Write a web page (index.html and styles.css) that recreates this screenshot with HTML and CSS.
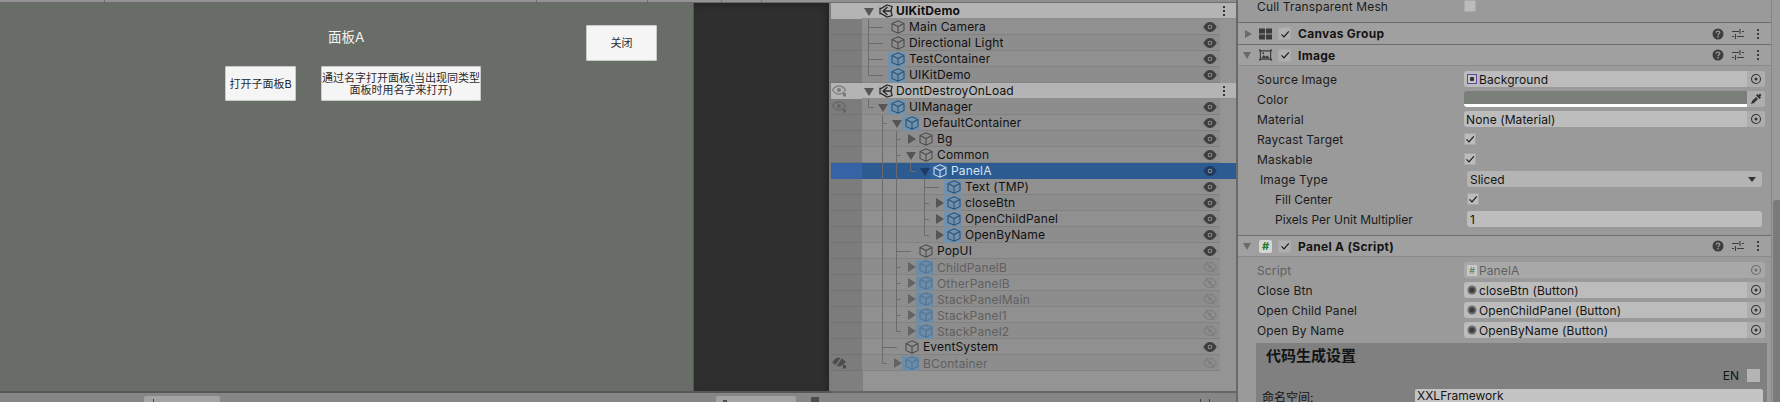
FILE: index.html
```html
<!DOCTYPE html>
<html lang="zh">
<head>
<meta charset="utf-8">
<title>UIKitDemo</title>
<link rel="stylesheet" href="styles.css">
</head>
<body>
<svg class="defs" width="0" height="0" aria-hidden="true">
  <symbol id="cube" viewBox="0 0 14 14"><path d="M7 .8 13 3.600v6.800L7 13.200 1 10.400V3.600zM1 3.600 7 6.600l6-3M7 6.600v6.600" fill="none" stroke="currentColor" stroke-width="1.100"/></symbol>
  <symbol id="unity" viewBox="0 0 14 14"><path d="M8 1 13 2.500 12 7 13 11.500 8 13 2 9.500H1L1 4.500H2zM8.500 3 4 7l4.500 4M4 7h7.500" fill="none" stroke="currentColor" stroke-width="1.300"/></symbol>
  <symbol id="eye" viewBox="0 0 14 12"><path d="M.3 6C3 1.800 5 1 7 1S11 1.800 13.700 6C11 10.200 9 11 7 11S3 10.200.3 6z" fill="currentColor"/><circle cx="7" cy="6" r="2.300" fill="#8f8f8f"/><circle cx="7" cy="6" r="1.300" fill="currentColor"/></symbol>
  <symbol id="eyeoff" viewBox="0 0 14 12"><path d="M.5 6C3 2.300 5 1.500 7 1.500S11 2.300 13.500 6C11 9.700 9 10.500 7 10.500S3 9.700.5 6z" fill="none" stroke="currentColor" stroke-width="1.200"/><circle cx="7" cy="6" r="1.800" fill="currentColor"/><path d="M2.500 1 11.500 11" stroke="currentColor" stroke-width="1.400"/></symbol>
  <symbol id="sceneeye" viewBox="0 0 14 12"><path d="M.3 5C3 1.500 5 .8 7 .8S11 1.500 13.700 5C11 8.500 9 9.200 7 9.200S3 8.500 .3 5z" fill="none" stroke="currentColor" stroke-width="1.200"/><circle cx="7" cy="5" r="2" fill="currentColor"/><path d="M11 8h3v3.500h-3z" fill="currentColor"/></symbol>
  <symbol id="sceneoff" viewBox="0 0 14 12"><path d="M.3 5C3 1.500 5 .8 7 .8S11 1.500 13.700 5C11 8.500 9 9.200 7 9.200S3 8.500 .3 5z" fill="currentColor"/><path d="M3 10 10 0" stroke="#7c7c7c" stroke-width="1.400"/><path d="M11 8h3v3.500h-3z" fill="currentColor"/></symbol>
  <symbol id="kebab" viewBox="0 0 4 12"><path d="M1 1h2v2H1zM1 5h2v2H1zM1 9h2v2H1z" fill="currentColor"/></symbol>
  <symbol id="target" viewBox="0 0 12 12"><circle cx="6" cy="6" r="4.500" fill="none" stroke="currentColor" stroke-width="1.100"/><circle cx="6" cy="6" r="1.500" fill="currentColor"/></symbol>
  <symbol id="help" viewBox="0 0 12 12"><circle cx="6" cy="6" r="5.500" fill="currentColor"/><path d="M4.200 4.700C4.200 3.700 5 3.100 6 3.100s1.800.6 1.800 1.500C7.800 5.800 6 5.700 6 7.200" fill="none" stroke="#9a9a9a" stroke-width="1.300"/><path d="M5.300 8.100h1.400v1.300H5.300z" fill="#9a9a9a"/></symbol>
  <symbol id="sliders" viewBox="0 0 12 12"><path d="M0 3.500h7M10 3.500h2M8 1v5M0 8.500h2M5 8.500h7M3.500 6v5" fill="none" stroke="currentColor" stroke-width="1.100"/></symbol>
  <symbol id="comp" viewBox="0 0 13 11"><path d="M0 0h6v5H0zM7 0h6v5H7zM0 6h6v5H0zM7 6h6v5H7z" fill="currentColor"/></symbol>
  <symbol id="picture" viewBox="0 0 14 12"><path d="M1.500 1.500h11v9h-11z" fill="none" stroke="currentColor" stroke-width="1.200"/><path d="M2.500 9.500 5 6l2 2 2-1.500 2.500 3z" fill="currentColor"/><circle cx="4.500" cy="4" r="1" fill="currentColor"/><path d="M0 0h2v2H0zM12 0h2v2h-2zM0 10h2v2H0zM12 10h2v2h-2z" fill="currentColor"/></symbol>
  <symbol id="check" viewBox="0 0 12 12"><path d="M2.500 6.300 5 8.800 9.800 3.300" fill="none" stroke="currentColor" stroke-width="1.200"/></symbol>
  <symbol id="dropper" viewBox="0 0 12 12"><path d="M1 11 2 8 6 4 8 6 4 10zM6 2.500 9.500 6 11 4.500 10 3.500 11.500 2 10 .5 8.500 2 7.500 1z" fill="currentColor"/></symbol>
  <symbol id="radio" viewBox="0 0 10 10"><circle cx="5" cy="5" r="4.500" fill="#6d6d6d"/><circle cx="5" cy="5" r="2.600" fill="#3c3c3c"/></symbol>
</svg>

<main class="app">
  <section class="left">
    <div class="strip"><i class="t1"></i><i class="t2"></i><i class="t3"></i><i class="t4"></i><i class="t5"></i></div>
    <div class="stage">
      <div class="game">
        <h1 class="game-title">面板A</h1>
        <button class="ui-btn btn-close">关闭</button>
        <button class="ui-btn btn-child">打开子面板B</button>
        <button class="ui-btn btn-name">通过名字打开面板(当出现同类型面板时用名字来打开)</button>
      </div>
      <div class="void"></div>
    </div>
    <div class="foot">
      <span class="foot-tab tab-a"><i class="mark"></i></span>
      <span class="foot-tab tab-b"><i class="sq small"></i></span>
      <i class="sq"></i>
    </div>
  </section>

  <section class="hier">
    <div class="hier-top"></div>
    <div class="tree">
      <div class="row scene"><span class="gut"></span><span class="arrow down"></span><svg class="uni"><use href="#unity"/></svg><b class="name">UIKitDemo</b><svg class="keb"><use href="#kebab"/></svg></div>
      <div class="row d1 a"><span class="gut"></span><span class="ind"></span><span class="arrow"></span><span class="ico"><svg><use href="#cube"/></svg></span><span class="name">Main Camera</span><svg class="vis"><use href="#eye"/></svg></div>
      <div class="row d1 b"><span class="gut"></span><span class="ind"></span><span class="arrow"></span><span class="ico"><svg><use href="#cube"/></svg></span><span class="name">Directional Light</span><svg class="vis"><use href="#eye"/></svg></div>
      <div class="row d1 a"><span class="gut"></span><span class="ind"></span><span class="arrow"></span><span class="ico pf"><svg><use href="#cube"/></svg></span><span class="name">TestContainer</span><svg class="vis"><use href="#eye"/></svg></div>
      <div class="row d1 b"><span class="gut"></span><span class="ind"></span><span class="arrow"></span><span class="ico pf"><svg><use href="#cube"/></svg></span><span class="name">UIKitDemo</span><svg class="vis"><use href="#eye"/></svg></div>
      <div class="row scene"><span class="gut"><svg class="sv"><use href="#sceneeye"/></svg></span><span class="arrow down"></span><svg class="uni"><use href="#unity"/></svg><span class="name">DontDestroyOnLoad</span><svg class="keb"><use href="#kebab"/></svg></div>
      <div class="row d1 b"><span class="gut"><svg class="sv"><use href="#sceneeye"/></svg></span><span class="ind"></span><span class="arrow down"></span><span class="ico pf"><svg><use href="#cube"/></svg></span><span class="name">UIManager</span><svg class="vis"><use href="#eye"/></svg></div>
      <div class="row d2 a"><span class="gut"></span><span class="ind"></span><span class="arrow down"></span><span class="ico pf"><svg><use href="#cube"/></svg></span><span class="name">DefaultContainer</span><svg class="vis"><use href="#eye"/></svg></div>
      <div class="row d3 b"><span class="gut"></span><span class="ind"></span><span class="arrow right"></span><span class="ico"><svg><use href="#cube"/></svg></span><span class="name">Bg</span><svg class="vis"><use href="#eye"/></svg></div>
      <div class="row d3 a"><span class="gut"></span><span class="ind"></span><span class="arrow down"></span><span class="ico"><svg><use href="#cube"/></svg></span><span class="name">Common</span><svg class="vis"><use href="#eye"/></svg></div>
      <div class="row d4 sel"><span class="gut"></span><span class="ind"></span><span class="arrow down"></span><span class="ico pf"><svg><use href="#cube"/></svg></span><span class="name">PanelA</span><svg class="vis"><use href="#eye"/></svg></div>
      <div class="row d5 a"><span class="gut"></span><span class="ind"></span><span class="arrow"></span><span class="ico pf"><svg><use href="#cube"/></svg></span><span class="name">Text (TMP)</span><svg class="vis"><use href="#eye"/></svg></div>
      <div class="row d5 b"><span class="gut"></span><span class="ind"></span><span class="arrow right"></span><span class="ico pf"><svg><use href="#cube"/></svg></span><span class="name">closeBtn</span><svg class="vis"><use href="#eye"/></svg></div>
      <div class="row d5 a"><span class="gut"></span><span class="ind"></span><span class="arrow right"></span><span class="ico pf"><svg><use href="#cube"/></svg></span><span class="name">OpenChildPanel</span><svg class="vis"><use href="#eye"/></svg></div>
      <div class="row d5 b"><span class="gut"></span><span class="ind"></span><span class="arrow right"></span><span class="ico pf"><svg><use href="#cube"/></svg></span><span class="name">OpenByName</span><svg class="vis"><use href="#eye"/></svg></div>
      <div class="row d3 a"><span class="gut"></span><span class="ind"></span><span class="arrow"></span><span class="ico"><svg><use href="#cube"/></svg></span><span class="name">PopUI</span><svg class="vis"><use href="#eye"/></svg></div>
      <div class="row d3 b off"><span class="gut"></span><span class="ind"></span><span class="arrow right"></span><span class="ico pf"><svg><use href="#cube"/></svg></span><span class="name">ChildPanelB</span><svg class="vis"><use href="#eyeoff"/></svg></div>
      <div class="row d3 a off"><span class="gut"></span><span class="ind"></span><span class="arrow right"></span><span class="ico pf"><svg><use href="#cube"/></svg></span><span class="name">OtherPanelB</span><svg class="vis"><use href="#eyeoff"/></svg></div>
      <div class="row d3 b off"><span class="gut"></span><span class="ind"></span><span class="arrow right"></span><span class="ico pf"><svg><use href="#cube"/></svg></span><span class="name">StackPanelMain</span><svg class="vis"><use href="#eyeoff"/></svg></div>
      <div class="row d3 a off"><span class="gut"></span><span class="ind"></span><span class="arrow right"></span><span class="ico pf"><svg><use href="#cube"/></svg></span><span class="name">StackPanel1</span><svg class="vis"><use href="#eyeoff"/></svg></div>
      <div class="row d3 b off"><span class="gut"></span><span class="ind"></span><span class="arrow right"></span><span class="ico pf"><svg><use href="#cube"/></svg></span><span class="name">StackPanel2</span><svg class="vis"><use href="#eyeoff"/></svg></div>
      <div class="row d2 a"><span class="gut"></span><span class="ind"></span><span class="arrow"></span><span class="ico"><svg><use href="#cube"/></svg></span><span class="name">EventSystem</span><svg class="vis"><use href="#eye"/></svg></div>
      <div class="row d2 b off"><span class="gut"><svg class="sv"><use href="#sceneoff"/></svg></span><span class="ind"></span><span class="arrow right"></span><span class="ico pf"><svg><use href="#cube"/></svg></span><span class="name">BContainer</span><svg class="vis"><use href="#eyeoff"/></svg></div>
      <svg class="lines" width="406" height="390" viewBox="0 0 406 390" aria-hidden="true">
        <path d="M37.500 16V72.500H52M37.500 24.500H52M37.500 40.500H52M37.500 56.500H52M37.500 96V104.500H43M51.500 112V360.500H56M51.500 120.500H56M51.500 344.500H66M65.500 128V328.500H70M65.500 136.500H70M65.500 152.500H70M65.500 248.500H80M65.500 264.500H70M65.500 280.500H70M65.500 296.500H70M65.500 312.500H70M79.500 160V168.500H85M93.500 176V232.500H98M93.500 184.500H108M93.500 200.500H98M93.500 216.500H98" fill="none" stroke="#6b6b6b" stroke-width="1"/>
      </svg>
    </div>
    <div class="foot hier-foot"><i class="mark"></i><i class="mark"></i></div>
  </section>

  <section class="insp">
    <div class="props first">
      <div class="prop"><label>Cull Transparent Mesh</label><span class="cb"></span></div>
    </div>
    <header class="comp">
      <span class="arrow-c right"></span><svg class="cicon"><use href="#comp"/></svg><span class="cb tick"><svg><use href="#check"/></svg></span><b>Canvas Group</b>
      <span class="tools"><svg><use href="#help"/></svg><svg><use href="#sliders"/></svg><svg class="tk"><use href="#kebab"/></svg></span>
    </header>
    <header class="comp">
      <span class="arrow-c down"></span><svg class="cicon"><use href="#picture"/></svg><span class="cb tick"><svg><use href="#check"/></svg></span><b>Image</b>
      <span class="tools"><svg><use href="#help"/></svg><svg><use href="#sliders"/></svg><svg class="tk"><use href="#kebab"/></svg></span>
    </header>
    <div class="props">
      <div class="prop"><label>Source Image</label><span class="field"><i class="sprite"></i><span class="val">Background</span><span class="pick"><svg><use href="#target"/></svg></span></span></div>
      <div class="prop"><label>Color</label><span class="field color"><span class="swatch"></span><span class="pick"><svg><use href="#dropper"/></svg></span></span></div>
      <div class="prop"><label>Material</label><span class="field plain"><span class="val">None (Material)</span><span class="pick"><svg><use href="#target"/></svg></span></span></div>
      <div class="prop"><label>Raycast Target</label><span class="cb tick"><svg><use href="#check"/></svg></span></div>
      <div class="prop"><label>Maskable</label><span class="cb tick"><svg><use href="#check"/></svg></span></div>
      <div class="prop ind1"><label>Image Type</label><span class="drop"><span>Sliced</span><i></i></span></div>
      <div class="prop ind2"><label>Fill Center</label><span class="cb tick"><svg><use href="#check"/></svg></span></div>
      <div class="prop ind2"><label>Pixels Per Unit Multiplier</label><span class="drop num">1</span></div>
    </div>
    <header class="comp script">
      <span class="arrow-c down"></span><span class="hash">#</span><span class="cb tick"><svg><use href="#check"/></svg></span><b>Panel A (Script)</b>
      <span class="tools"><svg><use href="#help"/></svg><svg><use href="#sliders"/></svg><svg class="tk"><use href="#kebab"/></svg></span>
    </header>
    <div class="props">
      <div class="prop dim"><label>Script</label><span class="field"><i class="hash-s">#</i><span class="val">PanelA</span><span class="pick"><svg><use href="#target"/></svg></span></span></div>
      <div class="prop"><label>Close Btn</label><span class="field"><svg class="rad"><use href="#radio"/></svg><span class="val">closeBtn (Button)</span><span class="pick"><svg><use href="#target"/></svg></span></span></div>
      <div class="prop"><label>Open Child Panel</label><span class="field"><svg class="rad"><use href="#radio"/></svg><span class="val">OpenChildPanel (Button)</span><span class="pick"><svg><use href="#target"/></svg></span></span></div>
      <div class="prop"><label>Open By Name</label><span class="field"><svg class="rad"><use href="#radio"/></svg><span class="val">OpenByName (Button)</span><span class="pick"><svg><use href="#target"/></svg></span></span></div>
    </div>
    <div class="gen">
      <h2>代码生成设置</h2>
      <div class="en"><span>EN</span><i></i></div>
      <div class="ns"><label>命名空间:</label><span class="ns-f">XXLFramework</span></div>
    </div>
    <i class="thumb"></i>
  </section>
</main>
</body>
</html>
```

FILE: styles.css
```css
* { box-sizing: border-box; }
html, body { margin: 0; height: 402px; overflow: hidden; background: #858585; }
body, button { font-family: Inter, "Noto Sans CJK SC", sans-serif; font-size: 12px; color: #111; }
.defs { position: absolute; }
.app { display: flex; height: 402px; width: 1780px; overflow: hidden; }

/* scene + game */
.left { width: 831px; display: flex; flex-direction: column; flex: none; }
.strip { height: 3px; background: #939393; border-bottom: 1px solid #6a6a6a; display: flex; flex: none; }
.strip i { width: 1px; height: 2px; background: #6f6f6f; }
.t1 { margin-left: 104px; }
.t2 { margin-left: 431px; }
.t3 { margin-left: 110px; }
.t4 { margin-left: 73px; }
.t5 { margin-left: 39px; }
.stage { height: 390px; display: flex; flex: none; border-bottom: 2px solid #575757; }
.game {
  width: 694px; flex: none; background: #686d68; border-right: 1px solid #555;
  display: grid; grid-template-columns: 225px 71px 25px 160px 105px 71px;
  grid-template-rows: 36px 35px; row-gap: 5px; padding-top: 22px; align-content: start;
}
.void { flex: 1; background: #2f2f2f; border-right: 2px solid #7b7b7b; box-shadow: inset 0 6px 6px -4px #262626, inset -6px 0 6px -4px #262626; }
.game-title { grid-column: 4; grid-row: 1; margin: 4px 0 0 7px; font-size: 13.500px; font-weight: 400; line-height: 16px; color: #f2f2f2; }
.ui-btn {
  border: 0; padding: 0; background: #f5f5f5; border-radius: 2px; color: #2a2a2a;
  font-size: 11px; line-height: 12px; box-shadow: 0 0 0 1px #c9cbc9 inset; text-align: center;
}
.btn-close { grid-column: 6; grid-row: 1; }
.btn-child { grid-column: 2; grid-row: 2; }
.btn-name { grid-column: 4; grid-row: 2; }

.foot { height: 7px; flex: 1; background: #868686; display: flex; position: relative; align-items: flex-end; }
.foot-tab { height: 6px; background: #a3a3a3; border-radius: 2px 2px 0 0; display: flex; align-items: flex-end; }
.tab-a { width: 76px; margin-left: 144px; padding-left: 9px; }
.tab-b { width: 80px; margin-left: 496px; padding-left: 7px; }
.mark { width: 1px; height: 3px; background: #444; display: block; }
.sq { width: 8px; height: 5px; background: #4e4e4e; margin-left: 15px; display: block; }
.sq.small { width: 4px; height: 2px; margin-left: 0; }

/* hierarchy */
.hier { width: 406px; flex: none; display: flex; flex-direction: column; border-right: 1px solid #6b6b6b; background: #979797; }
.hier-top { height: 3px; background: #8e8e8e; border-bottom: 1px solid #6f6f6f; flex: none; }
.tree { height: 390px; position: relative; flex: none; border-bottom: 2px solid #666; background: linear-gradient(90deg, #7f7f7f 32px, #949494 32px); }
.hier-foot { gap: 8px; justify-content: flex-end; padding-right: 26px; }
.row { height: 16px; display: flex; align-items: center; color: #101010; font-size: 12px; margin-right: 16px; white-space: nowrap; }
.row.a { background: #909090; box-shadow: 0 -1px 0 #828282 inset; }
.row.b { background: #8d8d8d; box-shadow: 0 -1px 0 #828282 inset; }
.gut { width: 31px; height: 16px; flex: none; background: #7c7c7c; box-shadow: 0 -1px 0 #727272 inset; display: flex; align-items: center; padding-left: 1px; }
.sv { width: 14px; height: 12px; color: #666; }
.row.scene { background: #b4b4b4; margin-right: 0; box-shadow: 0 -1px 0 #8d8d8d inset; }
.scene .gut { background: #b4b4b4; box-shadow: none; }
.scene .sv { color: #7a7a7a; }
.arrow { width: 14px; height: 16px; flex: none; position: relative; }
.arrow.down::after, .arrow.right::after { content: ""; position: absolute; }
.arrow.down::after { left: 2px; top: 5px; border: 5px solid transparent; border-top: 8px solid #555; border-bottom: 0; }
.arrow.right::after { left: 4px; top: 3px; border: 5px solid transparent; border-left: 8px solid #555; border-right: 0; }
.ind { flex: none; height: 16px; }
.d1 .ind { width: 14px; }
.d2 .ind { width: 28px; }
.d3 .ind { width: 42px; }
.d4 .ind { width: 56px; }
.d5 .ind { width: 70px; }
.uni { width: 14px; height: 14px; margin: 0 3px 0 3px; flex: none; color: #2a2a2a; }
.ico { width: 17px; height: 15px; flex: none; margin: 0 4px 0 -2px; display: flex; align-items: center; justify-content: flex-end; color: #4d4d4d; }
.ico svg { width: 14px; height: 14px; }
.ico.pf { background: #7191ad; color: #2b5578; }
.name { flex: 1; letter-spacing: .15px; padding-bottom: 2px; }
.vis { width: 14px; height: 12px; flex: none; margin-right: 3px; color: #3e3e3e; }
.keb { width: 4px; height: 12px; flex: none; margin-right: 10px; color: #333; }
.row.sel { background: #2c5b92; margin-right: 0; color: #d8e4f2; box-shadow: none; }
.sel .gut { background: #3464a6; box-shadow: none; }
.sel .vis { margin-right: 19px; color: #1e3a5e; }
.sel .ico.pf { background: #2f6099; color: #c7d8ea; }
.sel .arrow.down::after { border-top-color: #1c3c66; }
.off .name { color: #606060; padding-bottom: 0; }
.off .vis { color: #7d7d7d; }
.off .ico { color: #4f7699; background: #6f8ca6; }
.off .arrow::after { opacity: .75; }
.off .sv { color: #4d4d4d; }
.lines { position: absolute; left: 0; top: 0; pointer-events: none; }

/* inspector */
.insp { flex: 1; min-width: 0; background: #9a9a9a; color: #141414; border-left: 1px solid #666; position: relative; }
.insp::after { content: ""; position: absolute; top: 0; bottom: 0; left: 533px; width: 1px; background: #878787; }
.thumb { position: absolute; left: 535px; top: 200px; bottom: 0; width: 7px; background: #7b7b7b; border-radius: 3px 0 0 0; }
.props { padding: 4px 0 5px 19px; margin-right: 9px; }
.props.first { padding-top: 0; margin-top: -3px; }
.prop { height: 20px; display: flex; align-items: center; white-space: nowrap; padding-bottom: 2px; }
.prop label { width: 207px; flex: none; letter-spacing: .15px; color: #1a1a1a; }
.ind1 label { padding-left: 3px; }
.ind2 label { padding-left: 18px; letter-spacing: 0; }
.cb { width: 12px; height: 12px; display: block; background: #bcbcbc; border-radius: 2px; box-shadow: 0 0 0 1px #a8a8a8 inset; flex: none; }
.cb.tick { color: #1b1b1b; }
.cb svg { width: 12px; height: 12px; display: block; }
.comp { height: 23px; display: flex; align-items: center; margin-right: 9px; border-top: 1px solid #6d6d6d; border-bottom: 1px solid #6d6d6d; background: #a0a0a0; }
.comp + .comp { border-top: 0; height: 21px; border-bottom-color: #8a8a8a; }
.comp.script { height: 22px; border-bottom-color: #8a8a8a; }
.comp b { font-size: 12px; letter-spacing: .3px; margin-left: 7px; }
.arrow-c { width: 21px; height: 12px; flex: none; position: relative; }
.arrow-c::after { content: ""; position: absolute; }
.arrow-c.right::after { left: 7px; top: 2px; border: 4px solid transparent; border-left: 7px solid #6a6a6a; border-right: 0; }
.arrow-c.down::after { left: 5px; top: 3px; border: 4.500px solid transparent; border-top: 7px solid #6a6a6a; border-bottom: 0; }
.cicon { width: 13px; height: 12px; flex: none; margin-right: 6px; color: #3b3b3b; }
.comp .cb { width: 13px; height: 13px; background: #b0b0b0; }
.comp .cb svg { margin: .5px; }
.hash { width: 13px; height: 13px; margin-right: 6px; background: #d6d6d6; color: #1e7a30; font-size: 11px; line-height: 13px; font-weight: 700; text-align: center; border-radius: 2px; flex: none; }
.tools { margin-left: auto; display: flex; align-items: center; gap: 8px; padding-right: 11px; color: #3d3d3d; }
.tools svg { width: 12px; height: 12px; display: block; }
.tools .tk { width: 4px; margin-left: 4px; }
.field { width: 301px; height: 16px; flex: none; display: flex; align-items: center; background: #bcbcbc; border-radius: 3px; overflow: hidden; padding-left: 3px; }
.field.plain { padding-left: 2px; }
.field .val { flex: 1; letter-spacing: .1px; }
.sprite { width: 10px; height: 10px; flex: none; margin-right: 2px; background: radial-gradient(circle, #333 2px, #c4c4c4 2.500px); border: 1px solid #5b4aa0; }
.rad { width: 10px; height: 10px; flex: none; margin-right: 2px; }
.hash-s { width: 10px; height: 11px; flex: none; margin-right: 2px; background: #c8c8c8; color: #4d7d55; font-size: 9px; line-height: 11px; font-style: normal; text-align: center; }
.pick { width: 18px; height: 16px; flex: none; background: #adadad; display: flex; align-items: center; justify-content: center; color: #333; }
.pick svg { width: 12px; height: 12px; display: block; }
.field.color { padding-left: 0; background: #adadad; }
.swatch { flex: 1; height: 16px; background: #7a7f7a; border-bottom: 3px solid #fff; }
.dim label, .dim .val { color: #5f5f5f; }
.dim .field { background: #a8a8a8; }
.dim .pick { background: #a8a8a8; color: #6f6f6f; }
.drop { margin-left: 3px; width: 295px; height: 16px; display: flex; justify-content: space-between; align-items: center; padding: 0 6px 0 3px; background: #b4b4b4; border-radius: 3px; flex: none; }
.drop i { width: 0; height: 0; border: 4px solid transparent; border-top: 5px solid #333; border-bottom: 0; }
.num { background: #bdbdbd; }
.ind2 .cb { margin-left: 3px; }
.gen { margin: -3px 0 0 18px; width: 511px; height: 70px; background: #808080; padding: 5px 4px 0 6px; }
.gen h2 { margin: 0 0 0 4px; font-size: 15px; line-height: 16px; font-weight: 700; color: #141414; }
.en { display: flex; justify-content: flex-end; align-items: center; gap: 8px; margin: 3px 3px 0 0; height: 16px; }
.en i { width: 13px; height: 13px; background: #b4b4b4; display: block; }
.ns { display: flex; align-items: center; margin-top: 5px; }
.ns label { width: 153px; flex: none; }
.ns-f { width: 348px; height: 16px; background: #c4c4c4; border-radius: 2px; padding: 0 2px; flex: none; line-height: 14px; }
```
